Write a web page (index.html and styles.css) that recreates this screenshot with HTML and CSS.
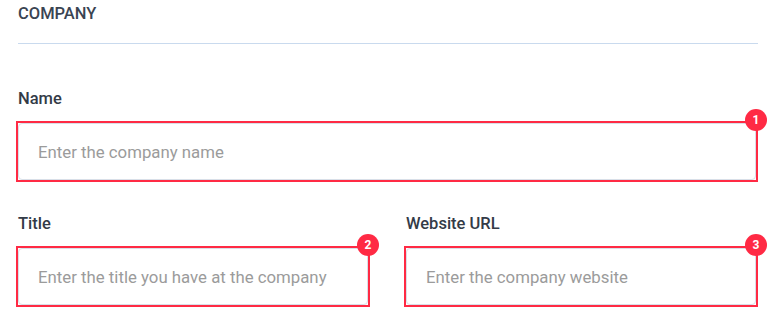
FILE: index.html
```html
<!DOCTYPE html>
<html lang="en">
<head>
  <meta charset="UTF-8">
  <title>Company</title>
  <link rel="stylesheet" href="styles.css">
</head>
<body>

  <div class="section">
    <h3 class="section-title">COMPANY</h3>

    <div class="field">
      <label for="companyName">Name</label>
      <div class="mark">
        <input type="text" id="companyName" placeholder="Enter the company name">
        <span class="badge">1</span>
      </div>
    </div>

    <div class="row">
      <div class="field">
        <label for="jobTitle">Title</label>
        <div class="mark">
          <input type="text" id="jobTitle" placeholder="Enter the title you have at the company">
          <span class="badge">2</span>
        </div>
      </div>
      <div class="field">
        <label for="website">Website URL</label>
        <div class="mark">
          <input type="text" id="website" placeholder="Enter the company website">
          <span class="badge">3</span>
        </div>
      </div>
    </div>
  </div>

</body>
</html>
```

FILE: styles.css
```css
body {
  margin: 0;
  font-family: Roboto, "Liberation Sans", sans-serif;
  background-color: #fff;
  color: #2d3541;
}

.section {
  padding: 4px 20px 0 16px;
}

.section-title {
  margin: 0 0 0 2px;
  padding-bottom: 19px;
  border-bottom: 1px solid #c9daee;
  font-size: 16.5px;
  font-weight: 500;
  line-height: 20px;
  color: #3a4452;
}

.field {
  margin-top: 45px;
}

.row .field {
  margin-top: 32px;
}

.field label {
  display: block;
  margin-left: 2px;
  margin-bottom: 12px;
  font-size: 16.5px;
  font-weight: 500;
  line-height: 20px;
  color: #333b47;
}

.row {
  display: grid;
  grid-template-columns: 1fr 1fr;
  gap: 34px;
}

.mark {
  position: relative;
  border: 2px solid #ff2a44;
}

.mark input {
  display: block;
  box-sizing: border-box;
  width: 100%;
  height: 57px;
  margin: 0;
  padding: 0 19px;
  border: 1px solid #d8dfe8;
  border-radius: 4px;
  font-family: Roboto, "Liberation Sans", sans-serif;
  font-size: 16.8px;
  color: #2d3541;
  outline: none;
}

.mark input::placeholder {
  color: #9b9b9b;
}

.badge {
  position: absolute;
  top: -14px;
  right: -11px;
  width: 22px;
  height: 22px;
  border-radius: 50%;
  background-color: #ff2a44;
  color: #fff;
  font-size: 12px;
  font-weight: 700;
  line-height: 22px;
  text-align: center;
}
```
